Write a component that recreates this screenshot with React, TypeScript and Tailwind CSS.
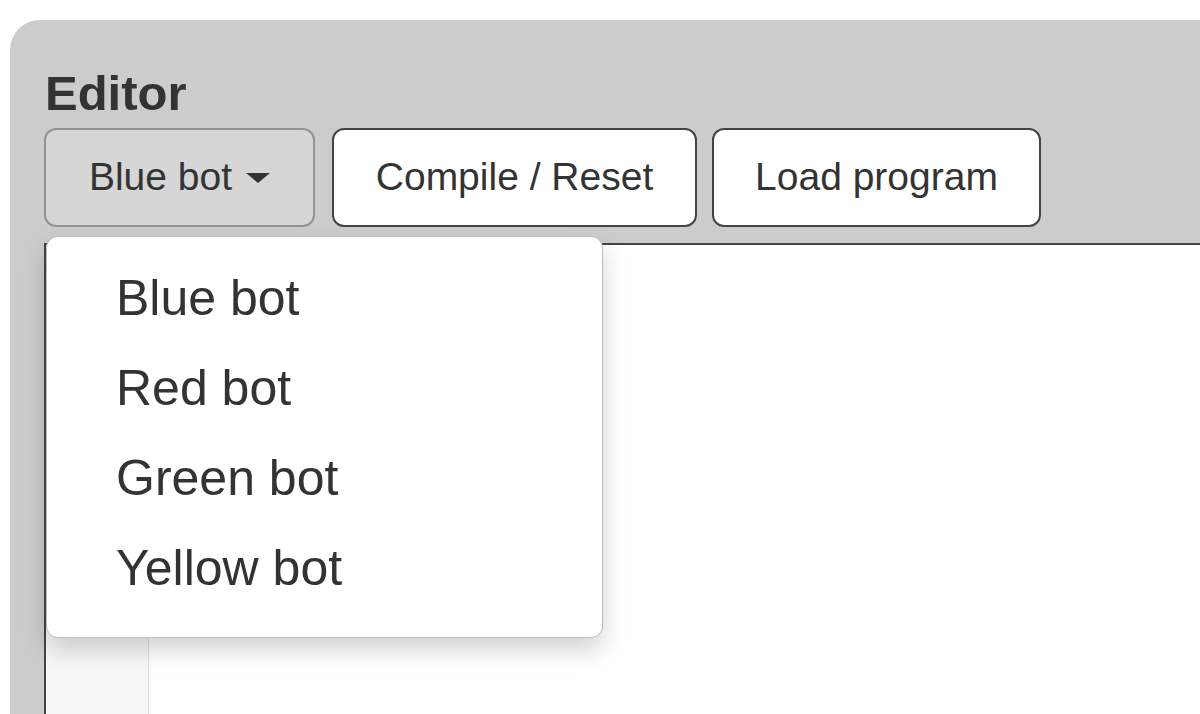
import React from 'react'

const bots = ['Blue bot', 'Red bot', 'Green bot', 'Yellow bot']

export default function App() {
  return (
    <div className="h-[714px] overflow-hidden bg-white pl-[10px] pt-[20px] font-['Liberation_Sans',Arial,sans-serif] text-[#333]">
      <div className="flex h-[694px] flex-col rounded-tl-[30px] bg-[#cccccc] pl-[34px] pt-[47px]">
        <h3 className="ml-[1px] text-[49px] font-bold leading-[53px]">Editor</h3>
        <div className="mt-[8px] flex">
          <div className="relative">
            <button className="flex h-[99px] w-[271px] items-center justify-center rounded-[12px] border-2 border-[#929292] bg-[#d6d6d6] pb-[3px] text-[39px] leading-none">
              Blue bot
              <span className="ml-[14px] mt-[4px] h-0 w-0 border-l-[12px] border-r-[12px] border-t-[10px] border-l-transparent border-r-transparent border-t-[#333]" />
            </button>
            <div className="absolute left-[2px] top-[108px] z-10 w-[557px] rounded-[12px] border border-[#bdbdbd] bg-white pb-[24px] pt-[16px] shadow-[0_12px_24px_rgba(0,0,0,0.175)]">
              {bots.map((b) => (
                <div key={b} className="h-[90px] pl-[69px] text-[50px] leading-[90px]">
                  {b}
                </div>
              ))}
            </div>
          </div>
          <button className="ml-[17px] flex h-[99px] w-[365px] items-center justify-center rounded-[12px] border-2 border-[#444] bg-white pb-[3px] text-[39px] leading-none">
            Compile / Reset
          </button>
          <button className="ml-[15px] flex h-[99px] w-[329px] items-center justify-center rounded-[12px] border-2 border-[#444] bg-white pb-[3px] text-[39px] leading-none">
            Load program
          </button>
        </div>
        <div className="mt-[16px] flex flex-1 border-l-2 border-t-2 border-[#444] bg-white">
          <div className="w-[103px] border-r border-[#dddddd] bg-[#f7f7f7]" />
          <div className="flex-1 bg-white" />
        </div>
      </div>
    </div>
  )
}
